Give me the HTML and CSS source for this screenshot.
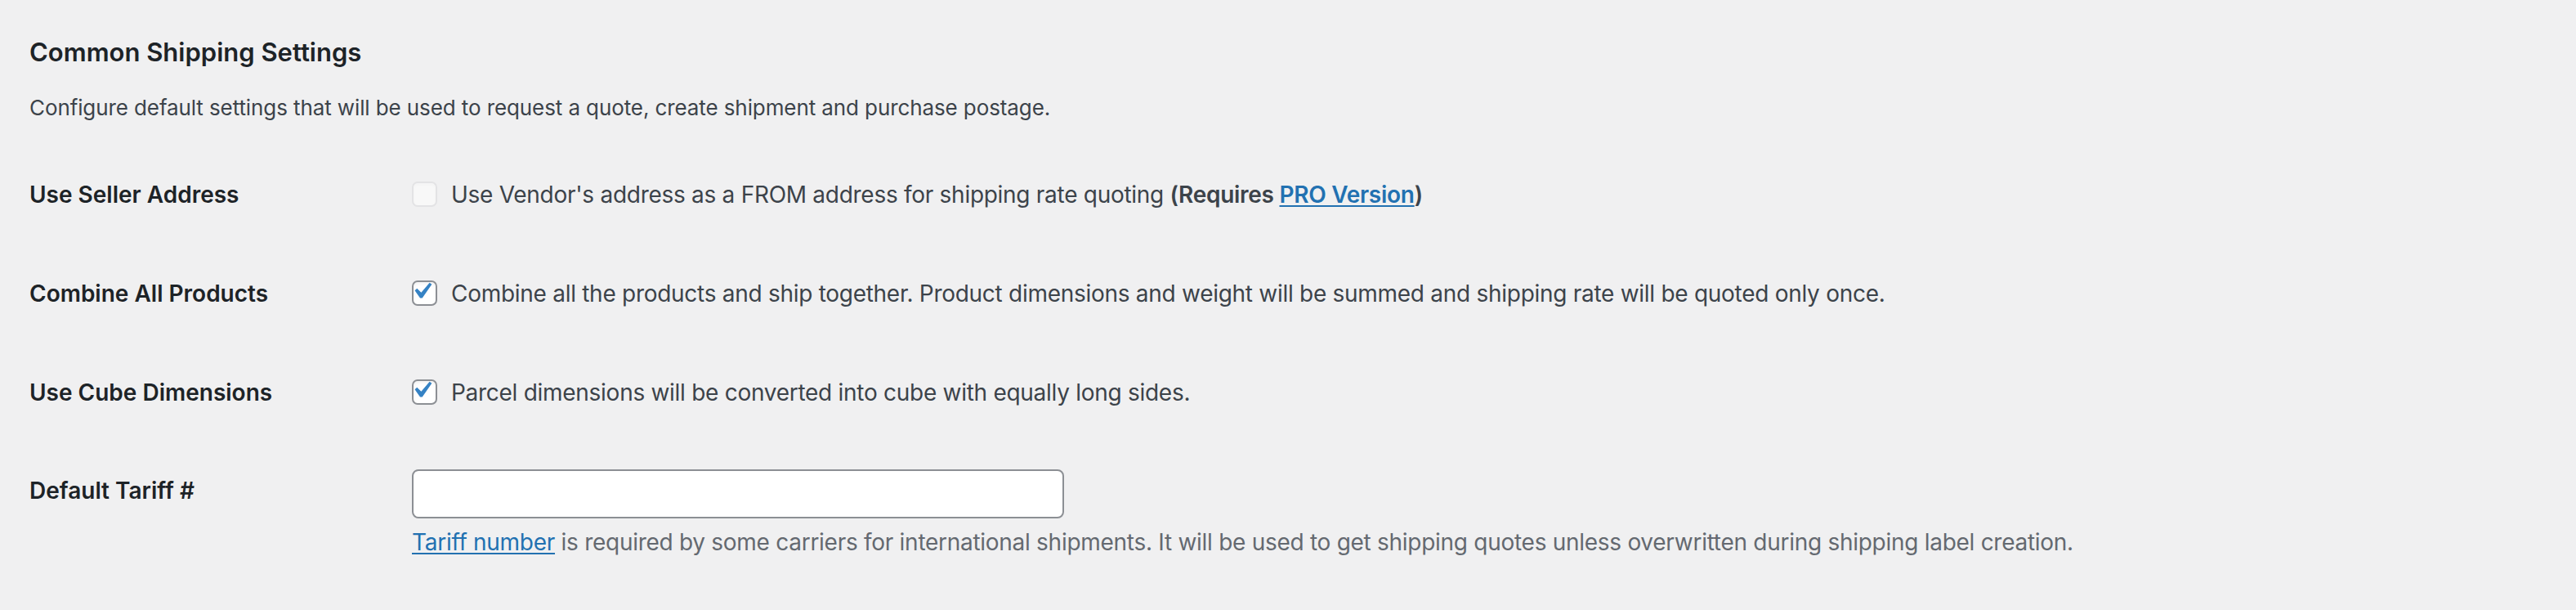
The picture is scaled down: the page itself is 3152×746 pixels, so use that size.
FILE: index.html
```html
<!DOCTYPE html>
<html lang="en">
<head>
<meta charset="utf-8">
<title>Common Shipping Settings</title>
<link rel="stylesheet" href="styles.css">
</head>
<body>
<div class="wrap">
  <h2 class="title">Common Shipping Settings</h2>
  <p class="intro">Configure default settings that will be used to request a quote, create shipment and purchase postage.</p>

  <div class="form-table">
    <div class="row">
      <div class="th">Use Seller Address</div>
      <div class="td">
        <label class="check-label">
          <span class="checkbox disabled"></span>
          <span>Use Vendor's address as a FROM address for shipping rate quoting <strong>(Requires <a href="#">PRO Version</a>)</strong></span>
        </label>
      </div>
    </div>

    <div class="row">
      <div class="th">Combine All Products</div>
      <div class="td">
        <label class="check-label">
          <span class="checkbox checked"><svg viewBox="0 0 20 20" class="tick"><path d="M14.83 4.89l1.34.94-5.81 8.38H9.02L5.78 9.67l1.34-1.25 2.57 2.4z"/></svg></span>
          <span>Combine all the products and ship together. Product dimensions and weight will be summed and shipping rate will be quoted only once.</span>
        </label>
      </div>
    </div>

    <div class="row">
      <div class="th">Use Cube Dimensions</div>
      <div class="td">
        <label class="check-label">
          <span class="checkbox checked"><svg viewBox="0 0 20 20" class="tick"><path d="M14.83 4.89l1.34.94-5.81 8.38H9.02L5.78 9.67l1.34-1.25 2.57 2.4z"/></svg></span>
          <span>Parcel dimensions will be converted into cube with equally long sides.</span>
        </label>
      </div>
    </div>

    <div class="row row-input">
      <div class="th th-top">Default Tariff #</div>
      <div class="td td-top">
        <input type="text" class="regular-text">
        <p class="description"><a href="#">Tariff number</a> is required by some carriers for international shipments. It will be used to get shipping quotes unless overwritten during shipping label creation.</p>
      </div>
    </div>
  </div>
</div>
</body>
</html>
```

FILE: styles.css
```css
html, body {
  margin: 0;
  padding: 0;
  background: #f0f0f1;
}

body {
  font-family: Inter, "Noto Sans", "Liberation Sans", sans-serif;
  font-size: 26px;
  color: #3c434a;
  height: 746px;
  overflow: hidden;
}

.wrap {
  padding: 0 36px;
}

.title {
  margin: 0;
  padding-top: 44px;
  font-size: 31px;
  line-height: 40px;
  font-weight: 600;
  color: #1d2327;
}

.intro {
  margin: 30px 0 0;
  line-height: 36px;
  letter-spacing: -0.1px;
}

.form-table {
  margin-top: 27px;
  display: flex;
  flex-direction: column;
}

.row {
  display: flex;
  align-items: center;
  height: 121px;
}

.th {
  width: 468px;
  flex: none;
  font-size: 28px;
  font-weight: 600;
  color: #1d2327;
  line-height: 36px;
}

.td {
  flex: 1;
  font-size: 28px;
  letter-spacing: -0.28px;
  line-height: 36px;
}

.check-label {
  display: flex;
  align-items: center;
  gap: 17px;
}

.checkbox {
  flex: none;
  box-sizing: border-box;
  width: 31px;
  height: 31px;
  border: 2px solid #8c8f94;
  border-radius: 7px;
  background: #fff;
  display: flex;
  align-items: center;
  justify-content: center;
  box-shadow: inset 0 2px 4px rgba(0,0,0,0.06);
}

.checkbox.disabled {
  border-color: rgba(220,220,222,0.75);
  background: rgba(255,255,255,0.5);
  box-shadow: inset 0 2px 4px rgba(0,0,0,0.02);
}

.tick {
  width: 40px;
  height: 40px;
  margin: -6px 0 0 -7px;
  fill: #3582c4;
  flex: none;
}

a {
  color: #2271b1;
  text-decoration: underline;
  text-underline-offset: 3px;
  text-decoration-thickness: 2px;
}

strong {
  font-weight: 600;
}

.row-input {
  align-items: flex-start;
  height: auto;
}

.th-top {
  padding-top: 42px;
}

.td-top {
  padding-top: 34px;
}

.regular-text {
  display: block;
  box-sizing: border-box;
  width: 798px;
  height: 60px;
  margin: 0;
  padding: 0 16px;
  border: 2px solid #8c8f94;
  border-radius: 8px;
  background: #fff;
  font: inherit;
}

.description {
  margin: 11px 0 0;
  line-height: 36px;
  color: #646970;
}
```
